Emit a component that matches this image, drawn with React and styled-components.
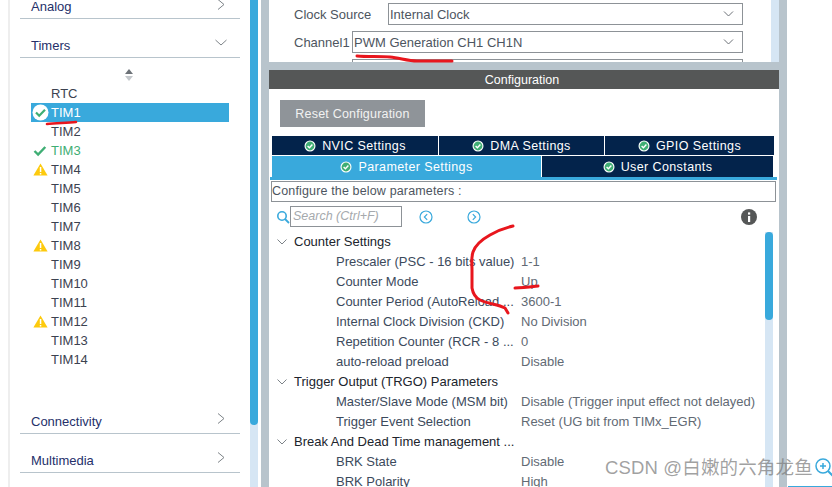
import styled, { createGlobalStyle } from "styled-components";

const GlobalStyle = createGlobalStyle`
  html, body {
    margin: 0;
    padding: 0;
    background: #fff;
  }
  body {
    font-family: "Liberation Sans", Arial, sans-serif;
  }
`;

const Page = styled.div`
  position: relative;
  width: 832px;
  height: 487px;
  overflow: hidden;
  display: flex;
  background: #fff;
`;

const LeftEdge = styled.div`
  width: 2px;
  margin-left: 8px;
  background: #eeeeee;
`;

const Sidebar = styled.div`
  width: 220px;
  padding: 0 10px;
  flex: none;
`;

const CategoryRow = styled.div`
  height: ${(p) => p.$h || 36}px;
  border-bottom: 1px solid #b8c4cc;
  padding: 0 13px 2px 11px;
  display: flex;
  align-items: flex-end;
  justify-content: space-between;
  font-size: 13px;
  line-height: 18px;
  color: #25306a;
`;

const CategoryIcon = styled.svg`
  width: 12px;
  height: 12px;
  fill: none;
  stroke: #7d8388;
  stroke-width: 1;
  margin-bottom: ${(p) => p.$mb || 5}px;
`;

const SortIcon = styled.svg`
  display: block;
  width: 10px;
  height: 12px;
  margin: 11px 0 3px 104px;
`;

const TimerList = styled.div`
  margin-left: 11px;
  width: 198px;
`;

const TimerRow = styled.div`
  position: relative;
  height: 19px;
  line-height: 19px;
  padding-left: 20px;
  font-size: 13px;
  color: ${(p) => (p.$active ? "#fff" : p.$ok ? "#3fae74" : "#3c4250")};
  background: ${(p) => (p.$active ? "#39a9dc" : "transparent")};
`;

const StatusSlot = styled.span`
  position: absolute;
  left: 0;
  top: 1px;
  width: 18px;
  height: 17px;
  display: flex;
  align-items: center;
  justify-content: center;
`;

const Spacer = styled.div`
  height: ${(p) => p.$h}px;
`;

const ScrollTrack = styled.div`
  width: ${(p) => p.$w || 8}px;
  flex: none;
  background: #d6e6f4;
  align-self: stretch;
`;

const ScrollThumb = styled.div`
  height: ${(p) => p.$h}px;
  background: #39a9dc;
  border-radius: ${(p) => (p.$round ? "4px" : "0 0 4px 4px")};
`;

const Main = styled.div`
  margin-left: 3px;
  width: 526px;
  flex: none;
  background: #b8c4cc;
  padding: 0 8px;
  box-sizing: border-box;
  display: flex;
  flex-direction: column;
  gap: 8px;
`;

const ModePanel = styled.div`
  height: 62px;
  flex: none;
  overflow: hidden;
  background: #fff;
  display: flex;
  justify-content: space-between;
`;

const ModeForm = styled.div`
  padding: 3px 0 0 25px;
  display: flex;
  flex-direction: column;
  gap: 6px;
`;

const ModeRow = styled.div`
  display: flex;
  align-items: center;
  height: 22px;
  font-size: 13px;
  color: #4d5560;
  justify-content: space-between;
  width: 449px;
`;

const Select = styled.div`
  width: ${(p) => p.$w}px;
  height: 22px;
  box-sizing: border-box;
  border: 1px solid #8d9297;
  padding: 0 8px 0 1px;
  display: flex;
  align-items: center;
  justify-content: space-between;
  font-size: 13px;
  color: #4d5560;
  flex: none;
`;

const ConfigPanel = styled.div`
  flex: 1;
  min-height: 0;
  overflow: hidden;
  background: #fff;
  display: flex;
  flex-direction: column;
`;

const ConfigHeader = styled.div`
  height: 19px;
  flex: none;
  background: #555757;
  color: #fff;
  font-size: 12.5px;
  line-height: 20px;
  text-align: center;
  padding-right: 4px;
`;

const ResetButton = styled.div`
  width: 145px;
  height: 27px;
  margin: 11px 0 9px 11px;
  background: #8f9499;
  color: #f2f2f2;
  font-size: 12.5px;
  letter-spacing: 0.2px;
  line-height: 28px;
  text-align: center;
  flex: none;
`;

const TabRow = styled.div`
  display: grid;
  grid-template-columns: ${(p) => p.$cols};
  gap: 1px;
  margin: 0 6px 1px 3px;
  height: ${(p) => p.$h}px;
  flex: none;
`;

const Tab = styled.div`
  background: ${(p) => (p.$active ? "#39a9dc" : "#03234b")};
  color: #fff;
  font-size: 12.5px;
  letter-spacing: 0.4px;
  display: flex;
  align-items: center;
  justify-content: center;
  gap: 6px;
  padding-top: 1px;
`;

const TabLine = styled.div`
  height: 3px;
  margin: -1px 2px 0 1px;
  background: #39a9dc;
  flex: none;
`;

const ConfigureBox = styled.div`
  height: 21px;
  box-sizing: border-box;
  margin: 1px 3px 0 2px;
  border: 1px solid #8d9297;
  font-size: 12.5px;
  letter-spacing: 0.15px;
  line-height: 19px;
  color: #4d5560;
  flex: none;
`;

const ParamArea = styled.div`
  flex: 1;
  min-height: 0;
  display: flex;
  flex-direction: column;
`;

const SearchBar = styled.div`
  display: flex;
  align-items: center;
  height: 21px;
  margin-top: 4px;
  padding-left: 7px;
  flex: none;
`;

const SearchInput = styled.div`
  width: 112px;
  height: 21px;
  box-sizing: border-box;
  border: 1px solid #8d9297;
  padding-left: 2px;
  font-size: 12.5px;
  line-height: 19px;
  font-style: italic;
  color: #a5a9ad;
`;

const NavIcon = styled.svg`
  width: 14px;
  height: 14px;
  fill: none;
  stroke: #39a9dc;
  stroke-width: 1.2;
  margin-left: ${(p) => p.$ml}px;
`;

const InfoIcon = styled.svg`
  width: 16px;
  height: 16px;
  margin-left: 260px;
`;

const ParamBody = styled.div`
  flex: 1;
  min-height: 0;
  display: flex;
  margin-top: 5px;
`;

const ParamList = styled.div`
  width: 496px;
  flex: none;
`;

const SectionRow = styled.div`
  height: 20px;
  line-height: 20px;
  display: flex;
  align-items: center;
  font-size: 13px;
  color: #20242c;
`;

const SectionChevron = styled.svg`
  width: 10px;
  height: 10px;
  fill: none;
  stroke: #7d8388;
  stroke-width: 1;
  margin: 0 7px 0 8px;
  flex: none;
`;

const ParamRow = styled.div`
  height: 20px;
  line-height: 20px;
  display: flex;
  font-size: 13px;
  padding-left: 67px;
`;

const ParamLabel = styled.span`
  width: 185px;
  flex: none;
  color: #3c4a5c;
  white-space: nowrap;
`;

const ParamValue = styled.span`
  color: #626a74;
  white-space: nowrap;
`;

const Annotations = styled.svg`
  position: absolute;
  left: 0;
  top: 0;
  width: 832px;
  height: 487px;
  pointer-events: none;
  fill: none;
  stroke: #e8161d;
  stroke-width: 3;
  stroke-linecap: round;
  stroke-linejoin: round;
`;

const Watermark = styled.div`
  position: absolute;
  left: 605px;
  top: 458px;
  font-family: "Liberation Sans", "Noto Sans CJK SC", sans-serif;
  font-size: 18.5px;
  letter-spacing: 0.15px;
  line-height: 20px;
  color: rgba(125, 125, 125, 0.72);
  white-space: nowrap;
`;

const ZoomMark = styled.svg`
  position: absolute;
  left: 814px;
  top: 457px;
  width: 20px;
  height: 20px;
  fill: none;
  stroke: #39a9dc;
  stroke-width: 1.5;
`;

const BottomLine = styled.div`
  position: absolute;
  left: 788px;
  right: 0;
  bottom: 0;
  height: 1px;
  background: #39a9dc;
`;

function TabCheck() {
  return (
    <svg width="12" height="12" viewBox="0 0 12 12">
      <circle cx="6" cy="6" r="5.5" fill="#fff" />
      <circle cx="6" cy="6" r="4.4" fill="#3fae74" />
      <path d="M3.6 6.1l1.8 1.7 3-3.2" fill="none" stroke="#fff" strokeWidth="1.4" />
    </svg>
  );
}

function Status({ kind }) {
  if (kind === "active") {
    return (
      <svg width="17" height="17" viewBox="0 0 17 17">
        <circle cx="8.5" cy="8.5" r="8" fill="#fff" />
        <path d="M4 8.5l3.2 3.2 5.8-6" fill="none" stroke="#3fae74" strokeWidth="2.2" />
      </svg>
    );
  }
  if (kind === "ok") {
    return (
      <svg width="14" height="12" viewBox="0 0 14 12">
        <path d="M1.5 6l3.6 3.6 7.2-7.6" fill="none" stroke="#3fae74" strokeWidth="2.4" />
      </svg>
    );
  }
  if (kind === "warn") {
    return (
      <svg width="15" height="13" viewBox="0 0 15 13">
        <path d="M7.5 0.5L14.6 12.5H0.4z" fill="#fdca0d" />
        <rect x="6.8" y="4" width="1.5" height="5" fill="#fff" />
        <rect x="6.8" y="10" width="1.5" height="1.5" fill="#fff" />
      </svg>
    );
  }
  return null;
}

function ChevronRight({ mb }) {
  return (
    <CategoryIcon viewBox="0 0 12 12" $mb={mb}>
      <path d="M3 0.5l6 5-6 5" />
    </CategoryIcon>
  );
}

function ChevronDown({ mb }) {
  return (
    <CategoryIcon viewBox="0 0 12 12" $mb={mb}>
      <path d="M0.5 3l5.5 5 5.5-5" />
    </CategoryIcon>
  );
}

function SelectChevron() {
  return (
    <svg width="11" height="8" viewBox="0 0 11 8" fill="none" stroke="#6d7278">
      <path d="M1 1.5l4.5 4.5 4.5-4.5" />
    </svg>
  );
}

const timers = [
  { name: "RTC" },
  { name: "TIM1", status: "active" },
  { name: "TIM2" },
  { name: "TIM3", status: "ok" },
  { name: "TIM4", status: "warn" },
  { name: "TIM5" },
  { name: "TIM6" },
  { name: "TIM7" },
  { name: "TIM8", status: "warn" },
  { name: "TIM9" },
  { name: "TIM10" },
  { name: "TIM11" },
  { name: "TIM12", status: "warn" },
  { name: "TIM13" },
  { name: "TIM14" },
];

const params = [
  { section: "Counter Settings" },
  { label: "Prescaler (PSC - 16 bits value)", value: "1-1" },
  { label: "Counter Mode", value: "Up" },
  { label: "Counter Period (AutoReload ...", value: "3600-1" },
  { label: "Internal Clock Division (CKD)", value: "No Division" },
  { label: "Repetition Counter (RCR - 8 ...", value: "0" },
  { label: "auto-reload preload", value: "Disable" },
  { section: "Trigger Output (TRGO) Parameters" },
  { label: "Master/Slave Mode (MSM bit)", value: "Disable (Trigger input effect not delayed)" },
  { label: "Trigger Event Selection", value: "Reset (UG bit from TIMx_EGR)" },
  { section: "Break And Dead Time management ..." },
  { label: "BRK State", value: "Disable" },
  { label: "BRK Polarity", value: "High" },
];

export default function App() {
  return (
    <Page>
      <GlobalStyle />
      <LeftEdge />
      <Sidebar>
        <CategoryRow $h={16}>
          Analog
          <ChevronRight mb={5} />
        </CategoryRow>
        <CategoryRow>
          Timers
          <ChevronDown mb={6} />
        </CategoryRow>
        <SortIcon viewBox="0 0 10 12">
          <path d="M5 0l4 5H1z" fill="#6d7278" />
          <path d="M5 12l4-5H1z" fill="#c4c8cc" />
        </SortIcon>
        <TimerList>
          {timers.map((t) => (
            <TimerRow key={t.name} $active={t.status === "active"} $ok={t.status === "ok"}>
              <StatusSlot>
                <Status kind={t.status} />
              </StatusSlot>
              {t.name}
            </TimerRow>
          ))}
        </TimerList>
        <Spacer $h={39} />
        <CategoryRow $h={23}>
          Connectivity
          <ChevronRight mb={6} />
        </CategoryRow>
        <CategoryRow>
          Multimedia
          <ChevronRight mb={6} />
        </CategoryRow>
      </Sidebar>
      <ScrollTrack>
        <ScrollThumb $h={425} />
      </ScrollTrack>
      <Main>
        <ModePanel>
          <ModeForm>
            <ModeRow>
              Clock Source
              <Select $w={355}>
                Internal Clock
                <SelectChevron />
              </Select>
            </ModeRow>
            <ModeRow>
              Channel1
              <Select $w={391}>
                PWM Generation CH1 CH1N
                <SelectChevron />
              </Select>
            </ModeRow>
            <ModeRow>
              <span />
              <Select $w={391} />
            </ModeRow>
          </ModeForm>
          <ScrollTrack />
        </ModePanel>
        <ConfigPanel>
          <ConfigHeader>Configuration</ConfigHeader>
          <ResetButton>Reset Configuration</ResetButton>
          <TabRow $cols="166px 165px 169px" $h={19}>
            <Tab><TabCheck />NVIC Settings</Tab>
            <Tab><TabCheck />DMA Settings</Tab>
            <Tab><TabCheck />GPIO Settings</Tab>
          </TabRow>
          <TabRow $cols="269px 231px" $h={21}>
            <Tab $active><TabCheck />Parameter Settings</Tab>
            <Tab><TabCheck />User Constants</Tab>
          </TabRow>
          <TabLine />
          <ConfigureBox>Configure the below parameters :</ConfigureBox>
          <ParamArea>
            <SearchBar>
              <NavIcon viewBox="0 0 14 14" $ml={0}>
                <circle cx="6" cy="6" r="4.2" strokeWidth="1.6" />
                <path d="M9 9l4 4" strokeWidth="1.8" />
              </NavIcon>
              <SearchInput>Search (Ctrl+F)</SearchInput>
              <NavIcon viewBox="0 0 14 14" $ml={17}>
                <circle cx="7" cy="7" r="6" />
                <path d="M8.2 4.2L5.4 7l2.8 2.8" />
              </NavIcon>
              <NavIcon viewBox="0 0 14 14" $ml={34}>
                <circle cx="7" cy="7" r="6" />
                <path d="M5.8 4.2L8.6 7l-2.8 2.8" />
              </NavIcon>
              <InfoIcon viewBox="0 0 16 16">
                <circle cx="8" cy="8" r="8" fill="#555757" />
                <rect x="7" y="7" width="2.2" height="6" fill="#fff" />
                <rect x="7" y="3.4" width="2.2" height="2.2" fill="#fff" />
              </InfoIcon>
            </SearchBar>
            <ParamBody>
              <ParamList>
                {params.map((p) =>
                  p.section ? (
                    <SectionRow key={p.section}>
                      <SectionChevron viewBox="0 0 10 10">
                        <path d="M0.5 2.5l4.5 4.5 4.5-4.5" />
                      </SectionChevron>
                      {p.section}
                    </SectionRow>
                  ) : (
                    <ParamRow key={p.label}>
                      <ParamLabel>{p.label}</ParamLabel>
                      <ParamValue>{p.value}</ParamValue>
                    </ParamRow>
                  )
                )}
              </ParamList>
              <ScrollTrack>
                <ScrollThumb $h={88} $round />
              </ScrollTrack>
            </ParamBody>
          </ParamArea>
        </ConfigPanel>
      </Main>
      <Annotations viewBox="0 0 832 487">
        <path d="M47 124C56 123 66 123 76 122" strokeWidth="2.6" />
        <path d="M357 56C368 57 380 56 390 57C400 58 408 61 417 61C430 61 440 61 452 61" />
        <path d="M513 226C504 228 497 231 490 235C481 240 475 246 473 252C471 258 472 264 472 270L472 288C473 294 476 298 480 300C488 304 498 304 505 308L508 313" />
        <path d="M515 288C523 288 530 287 538 286" />
      </Annotations>
      <Watermark>CSDN @白嫩的六角龙鱼</Watermark>
      <ZoomMark viewBox="0 0 20 20">
        <circle cx="9" cy="9" r="7" />
        <path d="M6 9h6M9 6v6" />
        <path d="M14 14l5 5" strokeWidth="2" />
      </ZoomMark>
      <BottomLine />
    </Page>
  );
}
